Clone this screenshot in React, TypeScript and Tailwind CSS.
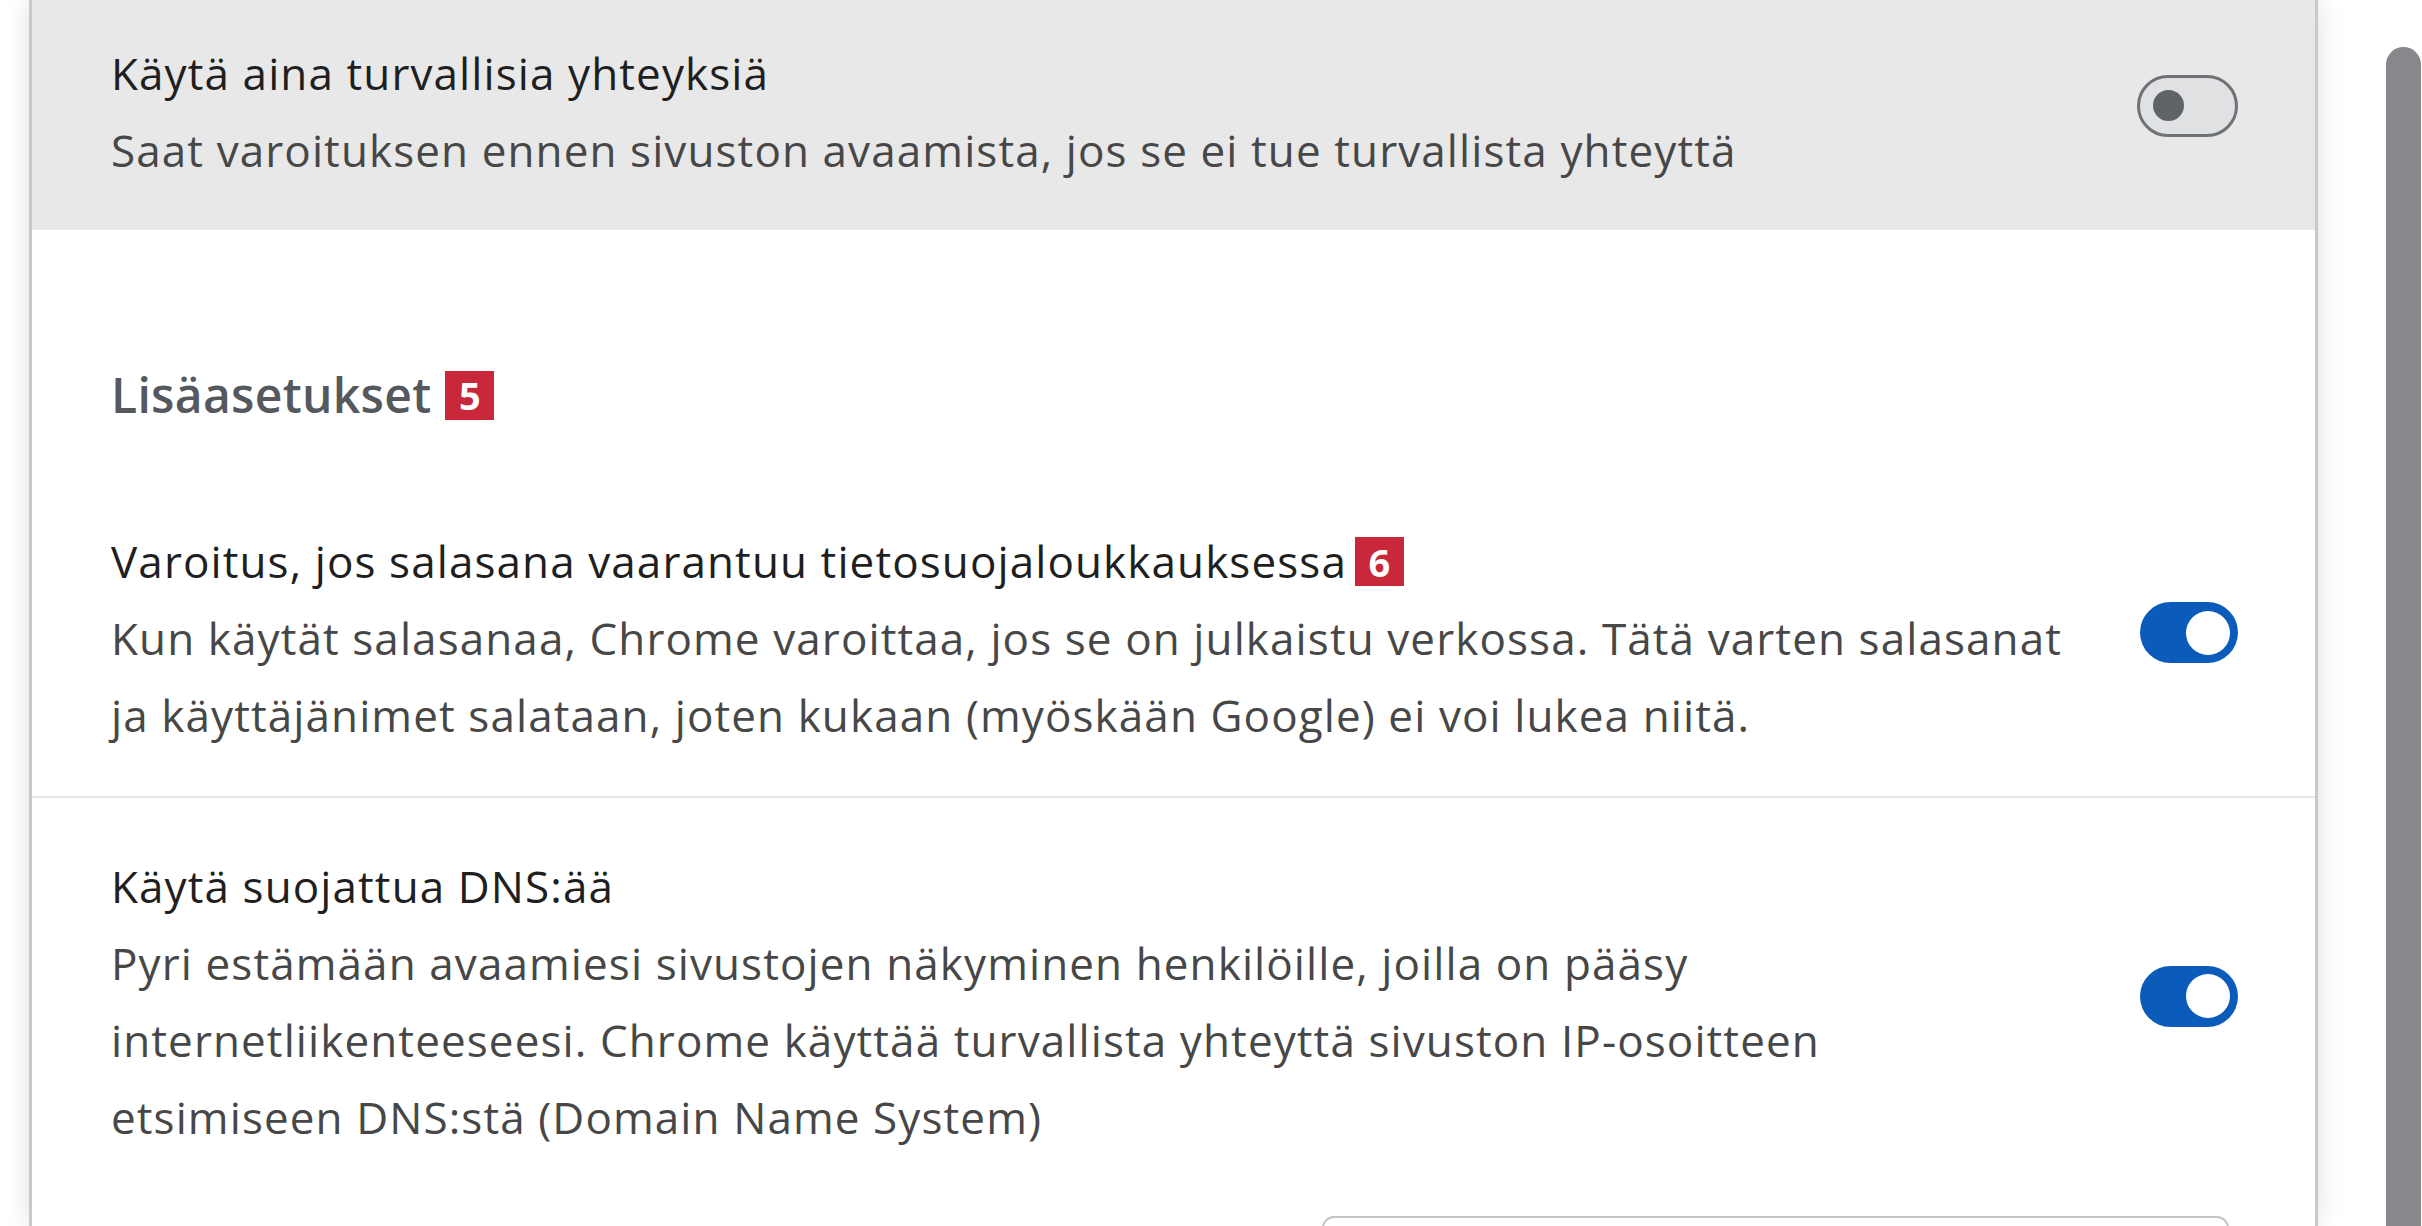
import React from "react";

const font = { fontFamily: '"Open Sans", "Noto Sans", sans-serif' };

function Toggle({ on }: { on: boolean }) {
  if (on) {
    return (
      <div className="mb-[12px] flex h-[61px] w-[98px] shrink-0 items-center justify-end rounded-full bg-[#0b5bbb] pr-[8px]">
        <div className="h-[44px] w-[44px] rounded-full bg-white" />
      </div>
    );
  }
  return (
    <div className="mb-[12px] flex h-[62px] w-[101px] shrink-0 items-center rounded-full border-[3px] border-[#6e7175] bg-[#dfe1e2] pl-[13px]">
      <div className="h-[31px] w-[31px] rounded-full bg-[#5f6368]" />
    </div>
  );
}

function Badge({ n, gap }: { n: number; gap: string }) {
  return (
    <span className={`${gap} inline-flex h-[49px] w-[49px] items-center justify-center bg-[#c8283a] align-middle text-[38px] font-bold leading-none tracking-normal text-white`}>
      {n}
    </span>
  );
}

function Row({
  title,
  badge,
  lines,
  on,
  className,
}: {
  title: string;
  badge?: number;
  lines: string[];
  on: boolean;
  className: string;
}) {
  return (
    <div className={`flex shrink-0 items-center justify-between pl-[79px] pr-[77px] ${className}`}>
      <div className="text-[44px] leading-[77px] tracking-[1.1px]">
        <div className="flex items-center text-[#1f1f1f]">
          <span>{title}</span>
          {badge !== undefined && <Badge n={badge} gap="ml-[8px]" />}
        </div>
        {lines.map((l) => (
          <div key={l} className="whitespace-nowrap text-[#474747]">
            {l}
          </div>
        ))}
      </div>
      <Toggle on={on} />
    </div>
  );
}

export default function App() {
  return (
    <div className="flex h-[1226px] w-[2422px] overflow-hidden bg-white" style={font}>
      <div className="w-[29px] shrink-0" />
      <div className="flex h-full w-[2289px] shrink-0 flex-col border-x-[3px] border-[#c9c9c9] bg-white shadow-[0_0_24px_rgba(0,0,0,0.13)]">
        <Row
          className="h-[230px] bg-[#e8e8e8] pb-[7px]"
          title="Käytä aina turvallisia yhteyksiä"
          lines={["Saat varoituksen ennen sivuston avaamista, jos se ei tue turvallista yhteyttä"]}
          on={false}
        />

        <div className="mt-[135px] flex shrink-0 items-center pl-[79px] text-[48px] font-semibold leading-[60px] tracking-[0.3px] text-[#55595e]">
          <span>Lisäasetukset</span>
          <Badge n={5} gap="ml-[14px]" />
        </div>

        <Row
          className="border-b-2 border-[#e6e6e6] pb-[42px] pt-[98px]"
          title="Varoitus, jos salasana vaarantuu tietosuojaloukkauksessa"
          badge={6}
          lines={[
            "Kun käytät salasanaa, Chrome varoittaa, jos se on julkaistu verkossa. Tätä varten salasanat",
            "ja käyttäjänimet salataan, joten kukaan (myöskään Google) ei voi lukea niitä.",
          ]}
          on
        />

        <Row
          className="pt-[50px]"
          title="Käytä suojattua DNS:ää"
          lines={[
            "Pyri estämään avaamiesi sivustojen näkyminen henkilöille, joilla on pääsy",
            "internetliikenteeseesi. Chrome käyttää turvallista yhteyttä sivuston IP-osoitteen",
            "etsimiseen DNS:stä (Domain Name System)",
          ]}
          on
        />

        <div className="ml-[1290px] mt-[60px] h-[80px] w-[907px] shrink-0 rounded-[12px] border-2 border-[#c4c4c4]" />
      </div>
      <div className="flex flex-1 justify-end">
        <div className="mr-[1px] mt-[47px] w-[35px] rounded-t-[18px] bg-[#87888c]" />
      </div>
    </div>
  );
}
